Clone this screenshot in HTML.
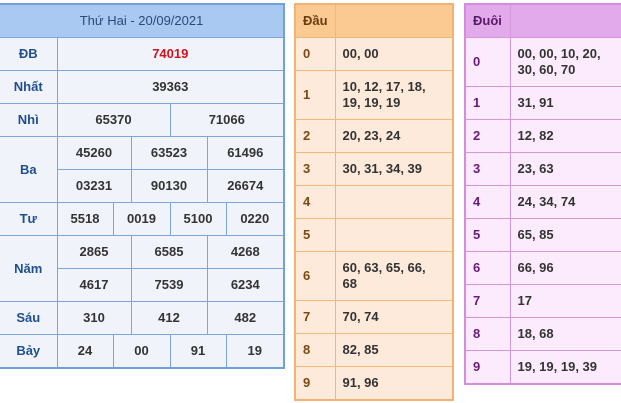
<!DOCTYPE html><html><head><meta charset="utf-8"><style>
body{margin:0;width:621px;height:403px;background:#fff;overflow:hidden;position:relative;font-family:"Liberation Sans",Arial,sans-serif;font-weight:bold;font-size:13px;color:#333}
table{position:absolute;border-collapse:collapse;table-layout:fixed}
td{padding:0;line-height:16px}
#L{left:-2px;top:3px;width:285px;border:2px solid #6fa0dc}
#L td{border:1px solid #7ba6dc;background:#f0f4fa;text-align:center;height:32px}
#L td.h{background:#a9c9f2;color:#2a4a78;font-weight:normal;font-size:13px;height:32px}
#L td.l{color:#1f4f8f}
#D{left:294px;top:3px;width:160px;border:2px solid #f2b272}
#D td{border:1px solid #f2b878;background:#fdeadb;height:32px;padding-left:7px}
#D td.h{background:#fbca92;height:32px;color:#6b3b0f}
#D td.l{color:#7a4a12}
#U{left:464px;top:3px;width:170px;border:2px solid #d58cdc}
#U td{border:1px solid #d596dc;background:#fcebfd;height:32px;padding-left:7px}
#U td.h{background:#e2aaea;height:32px;color:#5a1a6a}
#U td.l{color:#6a1a7a}
.r{color:#d0121b}
</style></head><body>
<table id="L">
<colgroup><col style="width:58px"><col style="width:56px"><col style="width:18px"><col style="width:39px"><col style="width:37px"><col style="width:19px"><col style="width:58px"></colgroup>
<tr><td class="h" colspan="7">Thứ Hai - 20/09/2021</td></tr>
<tr><td class="l">ĐB</td><td colspan="6" class="r">74019</td></tr>
<tr><td class="l">Nhất</td><td colspan="6">39363</td></tr>
<tr><td class="l">Nhì</td><td colspan="3">65370</td><td colspan="3">71066</td></tr>
<tr><td class="l" rowspan="2">Ba</td><td colspan="2">45260</td><td colspan="2">63523</td><td colspan="2">61496</td></tr>
<tr><td colspan="2">03231</td><td colspan="2">90130</td><td colspan="2">26674</td></tr>
<tr><td class="l">Tư</td><td>5518</td><td colspan="2">0019</td><td colspan="2">5100</td><td>0220</td></tr>
<tr><td class="l" rowspan="2">Năm</td><td colspan="2">2865</td><td colspan="2">6585</td><td colspan="2">4268</td></tr>
<tr><td colspan="2">4617</td><td colspan="2">7539</td><td colspan="2">6234</td></tr>
<tr><td class="l">Sáu</td><td colspan="2">310</td><td colspan="2">412</td><td colspan="2">482</td></tr>
<tr><td class="l">Bảy</td><td>24</td><td colspan="2">00</td><td colspan="2">91</td><td>19</td></tr>
</table>
<table id="D">
<colgroup><col style="width:40px"><col></colgroup>
<tr><td class="h">Đầu</td><td class="h"></td></tr>
<tr><td class="l">0</td><td>00, 00</td></tr>
<tr><td class="l" style="height:48px">1</td><td>10, 12, 17, 18,<br>19, 19, 19</td></tr>
<tr><td class="l">2</td><td>20, 23, 24</td></tr>
<tr><td class="l">3</td><td>30, 31, 34, 39</td></tr>
<tr><td class="l">4</td><td></td></tr>
<tr><td class="l">5</td><td></td></tr>
<tr><td class="l" style="height:48px">6</td><td>60, 63, 65, 66,<br>68</td></tr>
<tr><td class="l">7</td><td>70, 74</td></tr>
<tr><td class="l">8</td><td>82, 85</td></tr>
<tr><td class="l">9</td><td>91, 96</td></tr>
</table>
<table id="U">
<colgroup><col style="width:45px"><col></colgroup>
<tr><td class="h">Đuôi</td><td class="h"></td></tr>
<tr><td class="l" style="height:48px">0</td><td>00, 00, 10, 20,<br>30, 60, 70</td></tr>
<tr><td class="l">1</td><td>31, 91</td></tr>
<tr><td class="l">2</td><td>12, 82</td></tr>
<tr><td class="l">3</td><td>23, 63</td></tr>
<tr><td class="l">4</td><td>24, 34, 74</td></tr>
<tr><td class="l">5</td><td>65, 85</td></tr>
<tr><td class="l">6</td><td>66, 96</td></tr>
<tr><td class="l">7</td><td>17</td></tr>
<tr><td class="l">8</td><td>18, 68</td></tr>
<tr><td class="l">9</td><td>19, 19, 19, 39</td></tr>
</table>
</body></html>
